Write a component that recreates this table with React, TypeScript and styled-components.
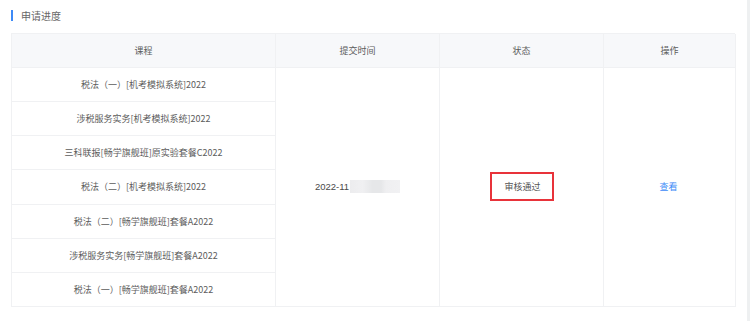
import React from "react";
import styled, { createGlobalStyle } from "styled-components";

const GlobalStyle = createGlobalStyle`
    html, body {
        margin: 0;
        padding: 0;
        background: #ffffff;
    }
    body {
        font-family: "Noto Sans CJK SC", "Liberation Sans", sans-serif;
    }
`;

const Page = styled.div`
    display: flex;
    width: 750px;
    height: 321px;
    overflow: hidden;
`;

const Main = styled.div`
    flex: 1;
    padding: 9px 12px 0 11px;
`;

const ScrollStrip = styled.div`
    width: 3px;
    background: #eef0f1;
`;

const SectionTitle = styled.div`
    display: flex;
    align-items: center;
    height: 13px;
    margin-bottom: 11px;
    font-size: 10px;
    color: #666;
    line-height: 13px;
    &::before {
        content: "";
        width: 2px;
        height: 11px;
        background: #3d8af7;
        margin-right: 8px;
    }
`;

const Table = styled.div`
    display: grid;
    width: 724px;
    grid-template-columns: 264px 164px 164px 132px;
    grid-template-rows: 34px repeat(7, 1fr);
    height: 274px;
    border-top: 1px solid #f0f1f3;
    border-left: 1px solid #f0f1f3;
    box-sizing: border-box;
`;

const Cell = styled.div<{ $head?: boolean; $span?: number }>`
    display: flex;
    align-items: center;
    justify-content: center;
    border-right: 1px solid #f0f1f3;
    border-bottom: 1px solid #f0f1f3;
    background: ${(p) => (p.$head ? "#f7f8fa" : "#ffffff")};
    color: #5c5c5c;
    font-size: 9px;
    white-space: nowrap;
    ${(p) => (p.$span ? `grid-row: span ${p.$span};` : "")}
`;

const DateText = styled.span`
    display: inline-flex;
    align-items: center;
    font-size: 9.5px;
    color: #4a4a4a;
    font-family: "Liberation Sans", sans-serif;
`;

const Blur = styled.span`
    display: inline-block;
    width: 50px;
    height: 13px;
    margin-left: 1px;
    background: linear-gradient(
        90deg,
        #ececee 0%,
        #f0f0f2 25%,
        #e6e7e9 45%,
        #e6e7e9 62%,
        #efeff1 72%,
        #f1f1f3 100%
    );
    filter: blur(0.6px);
`;

const StatusBox = styled.span`
    display: flex;
    align-items: center;
    justify-content: center;
    width: 58px;
    height: 25px;
    border: 2px solid #e8333a;
    font-size: 9px;
    color: #555;
    padding-left: 2px;
`;

const ViewLink = styled.a`
    color: #3d8af7;
    font-size: 9px;
    cursor: pointer;
    margin-right: 2px;
`;

const courses = [
    "税法（一）[机考模拟系统]2022",
    "涉税服务实务[机考模拟系统]2022",
    "三科联报[畅学旗舰班]原实验套餐C2022",
    "税法（二）[机考模拟系统]2022",
    "税法（二）[畅学旗舰班]套餐A2022",
    "涉税服务实务[畅学旗舰班]套餐A2022",
    "税法（一）[畅学旗舰班]套餐A2022",
];

function App() {
    return (
        <Page>
            <GlobalStyle />
            <Main>
                <SectionTitle>申请进度</SectionTitle>
                <Table>
                    <Cell $head>课程</Cell>
                    <Cell $head>提交时间</Cell>
                    <Cell $head>状态</Cell>
                    <Cell $head>操作</Cell>
                    {courses.map((c, i) => (
                        <React.Fragment key={i}>
                            <Cell style={{ gridColumn: 1 }}>{c}</Cell>
                            {i === 0 && (
                                <>
                                    <Cell $span={7}>
                                        <DateText>
                                            2022-11
                                            <Blur />
                                        </DateText>
                                    </Cell>
                                    <Cell $span={7}>
                                        <StatusBox>审核通过</StatusBox>
                                    </Cell>
                                    <Cell $span={7}>
                                        <ViewLink>查看</ViewLink>
                                    </Cell>
                                </>
                            )}
                        </React.Fragment>
                    ))}
                </Table>
            </Main>
            <ScrollStrip />
        </Page>
    );
}

export default App;
